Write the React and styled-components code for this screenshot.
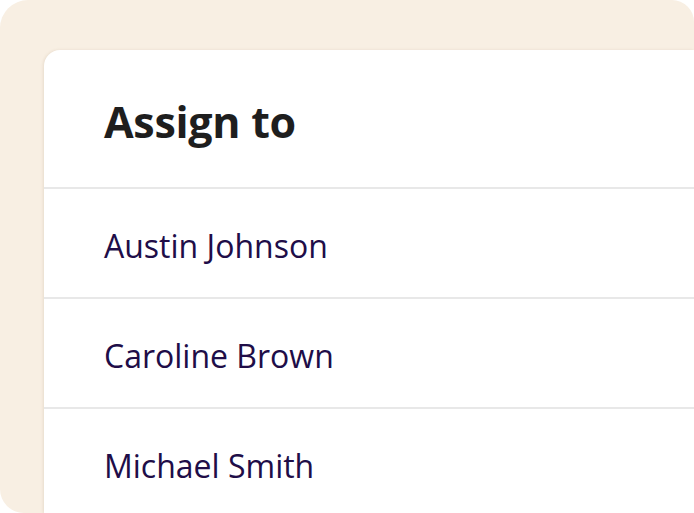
import React from "react";
import styled, { createGlobalStyle } from "styled-components";

const GlobalStyle = createGlobalStyle`
  html, body {
    margin: 0;
    padding: 0;
    background: #ffffff;
    font-family: "Open Sans", "Noto Sans", sans-serif;
  }
`;

const Frame = styled.div`
  width: 694px;
  height: 513px;
  box-sizing: border-box;
  padding: 50px 0 0 44px;
  background: #f8efe3;
  border-radius: 28px 22px 0 24px;
  overflow: hidden;
`;

const Card = styled.div`
  background: #ffffff;
  border-radius: 16px 0 0 0;
  height: 100%;
  box-shadow: -1px 0 3px rgba(120, 90, 50, 0.12);
`;

const Header = styled.div`
  height: 131px;
  display: flex;
  align-items: center;
  padding: 6px 0 0 60px;
  border-bottom: 2px solid #e8e8e8;
`;

const Title = styled.h2`
  margin: 0;
  font-size: 43px;
  font-weight: 700;
  color: #1e1e1e;
  letter-spacing: -0.3px;
`;

const Row = styled.div`
  height: 104px;
  display: flex;
  align-items: center;
  padding: 4px 0 0 60px;
  border-bottom: 2px solid #e8e8e8;
  font-size: 32px;
  color: #200d48;
`;

const people = ["Austin Johnson", "Caroline Brown", "Michael Smith"];

const App = () => (
  <>
    <GlobalStyle />
    <Frame>
      <Card>
        <Header>
          <Title>Assign to</Title>
        </Header>
        {people.map((name) => (
          <Row key={name}>{name}</Row>
        ))}
      </Card>
    </Frame>
  </>
);

export default App;
